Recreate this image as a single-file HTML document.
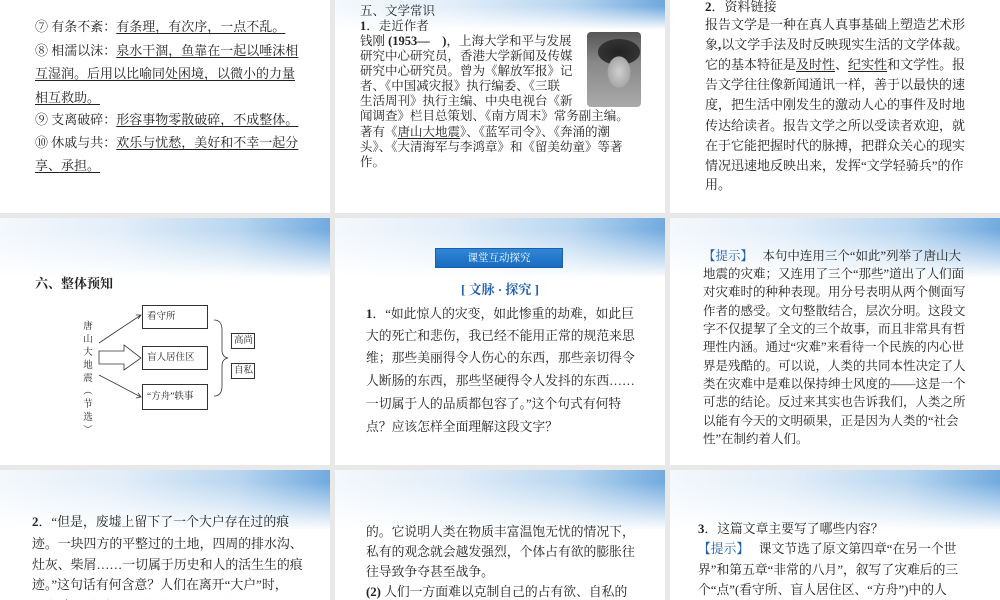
<!DOCTYPE html>
<html><head><meta charset="utf-8"><style>
body{margin:0;width:1000px;height:600px;background:#e8e8e8;position:relative;overflow:hidden;font-family:"Liberation Serif","Noto Serif CJK SC",serif;color:#222}
.p{position:absolute;background:#fff;overflow:hidden}
.hd{position:absolute;left:0;top:0;right:0;height:60px;background:linear-gradient(180deg,rgba(255,255,255,0) 0,rgba(255,255,255,0) 20%,#fff 100%),linear-gradient(100deg,#f4f8fc 0,#e3eef9 35%,#b9d6f0 70%,#6aa6dd 100%)}
.l{position:absolute;white-space:nowrap;font-size:13px}
.u{text-decoration:underline;text-underline-offset:2px}
.s{font-size:12.5px;line-height:15px}
.bl{color:#1f5fb0}
b{font-family:"Liberation Serif",serif}
.bx{position:absolute;border:1px solid #333;font-size:9.5px;background:#fff;box-sizing:border-box;padding-left:4px}
</style></head><body>
<!-- row1 -->
<div class="p" style="left:0;top:0;width:330px;height:213px">
<div class="l" style="left:35px;top:16px">⑦ 有条不紊：<span class="u">有条理，有次序，一点不乱。</span></div>
<div class="l" style="left:35px;top:40px">⑧ 相濡以沫：<span class="u">泉水干涸，鱼靠在一起以唾沫相</span></div>
<div class="l" style="left:35px;top:63px"><span class="u">互湿润。后用以比喻同处困境，以微小的力量</span></div>
<div class="l" style="left:35px;top:87px"><span class="u">相互救助。</span></div>
<div class="l" style="left:35px;top:109px">⑨ 支离破碎：<span class="u">形容事物零散破碎，不成整体。</span></div>
<div class="l" style="left:35px;top:132px">⑩ 休戚与共：<span class="u">欢乐与忧愁，美好和不幸一起分</span></div>
<div class="l" style="left:35px;top:155px"><span class="u">享、承担。</span></div>
</div>
<div class="p" style="left:335px;top:0;width:330px;height:213px">
<div class="hd" style="height:30px"></div>
<div class="l s" style="left:25px;top:4px">五、文学常识</div>
<div class="l s" style="left:25px;top:19px"><b>1</b>．走近作者</div>
<div class="l s" style="left:25px;top:34px">钱刚 <b>(1953—&nbsp;&nbsp;&nbsp;&nbsp;)</b>，上海大学和平与发展</div>
<div class="l s" style="left:25px;top:49px">研究中心研究员，香港大学新闻及传媒</div>
<div class="l s" style="left:25px;top:64px">研究中心研究员。曾为《解放军报》记</div>
<div class="l s" style="left:25px;top:79px">者、《中国减灾报》执行编委、《三联</div>
<div class="l s" style="left:25px;top:94px">生活周刊》执行主编、中央电视台《新</div>
<div class="l s" style="left:25px;top:109px">闻调查》栏目总策划、《南方周末》常务副主编。</div>
<div class="l s" style="left:25px;top:125px">著有《<span class="u">唐山大地震</span>》、《蓝军司令》、《奔涌的潮</div>
<div class="l s" style="left:25px;top:140px">头》、《大清海军与李鸿章》和《留美幼童》等著</div>
<div class="l s" style="left:25px;top:155px">作。</div>
<div style="position:absolute;left:252px;top:32px;width:54px;height:75px;border-radius:4px;background:radial-gradient(ellipse 16px 22px at 32px 40px,#d0d0d0 0,#a8a8a8 70%,transparent 72%),radial-gradient(ellipse 26px 16px at 32px 20px,#222 0,#333 80%,transparent 82%),linear-gradient(180deg,#555 0,#888 40%,#aaa 100%)"></div>
</div>
<div class="p" style="left:670px;top:0;width:330px;height:213px">
<div class="l" style="left:35px;top:-4px"><b>2</b>．资料链接</div>
<div class="l" style="left:35px;top:14px">报告文学是一种在真人真事基础上塑造艺术形</div>
<div class="l" style="left:35px;top:34px">象<b>,</b>以文学手法及时反映现实生活的文学体裁。</div>
<div class="l" style="left:35px;top:54px">它的基本特征是<span class="u">及时性</span>、<span class="u">纪实性</span>和文学性。报</div>
<div class="l" style="left:35px;top:74px">告文学往往像新闻通讯一样，善于以最快的速</div>
<div class="l" style="left:35px;top:94px">度，把生活中刚发生的激动人心的事件及时地</div>
<div class="l" style="left:35px;top:115px">传达给读者。报告文学之所以受读者欢迎，就</div>
<div class="l" style="left:35px;top:135px">在于它能把握时代的脉搏，把群众关心的现实</div>
<div class="l" style="left:35px;top:155px">情况迅速地反映出来，发挥“文学轻骑兵”的作</div>
<div class="l" style="left:35px;top:174px">用。</div>
</div>
<!-- row2 -->
<div class="p" style="left:0;top:218px;width:330px;height:247px">
<div class="hd"></div>
<div class="l" style="left:35px;top:55px;font-weight:bold;font-size:13px">六、整体预知</div>
<div class="bx" style="left:142px;top:87px;width:66px;height:24px;line-height:22px">看守所</div>
<div class="bx" style="left:142px;top:128px;width:66px;height:24px;line-height:22px">盲人居住区</div>
<div class="bx" style="left:142px;top:166px;width:66px;height:26px;line-height:24px">“方舟”轶事</div>
<div class="bx" style="left:231px;top:115px;width:24px;height:16px;line-height:14px;padding-left:2px">高尚</div>
<div class="bx" style="left:231px;top:145px;width:24px;height:16px;line-height:14px;padding-left:2px">自私</div>
<div style="position:absolute;left:82px;top:103px;width:12px;font-size:9.5px;line-height:13px;text-align:center">唐<br>山<br>大<br>地<br>震<br>︵<br>节<br>选<br>︶</div>
<svg style="position:absolute;left:0;top:0" width="330" height="247"><g fill="none" stroke="#333" stroke-width="0.8"><path d="M99 125 L141 97 M136 97 L141 97 L138 101"/><path d="M99 157 L141 179 M136 180 L141 179 L138 175"/><path d="M99 133 H124 V127 L141 140 L124 152 V146 H99 Z"/><path d="M214 102 Q222 102 222 112 V132 Q222 139 228 140 Q222 141 222 148 V168 Q222 178 214 178"/></g></svg>
</div>
<div class="p" style="left:335px;top:218px;width:330px;height:247px">
<div class="hd"></div>
<div style="position:absolute;left:100px;top:30px;width:128px;height:20px;background:linear-gradient(#2f86d6,#1a6cc0);border:1px solid #1a5ea8;color:#fff;font-size:10.5px;line-height:20px;text-align:center;box-sizing:border-box">课堂互动探究</div>
<div class="l bl" style="left:0;width:330px;text-align:center;top:61px;font-size:13px;font-weight:bold">[ 文脉 · 探究 ]</div>
<div class="l" style="left:31px;top:85px;font-size:12.8px"><b>1</b>．“如此惊人的灾变，如此惨重的劫难，如此巨</div>
<div class="l" style="left:31px;top:107px;font-size:12.8px">大的死亡和悲伤，我已经不能用正常的规范来思</div>
<div class="l" style="left:31px;top:129px;font-size:12.8px">维；那些美丽得令人伤心的东西，那些亲切得令</div>
<div class="l" style="left:31px;top:152px;font-size:12.8px">人断肠的东西，那些坚硬得令人发抖的东西……</div>
<div class="l" style="left:31px;top:175px;font-size:12.8px">一切属于人的品质都包容了。”这个句式有何特</div>
<div class="l" style="left:31px;top:198px;font-size:12.8px">点？应该怎样全面理解这段文字？</div>
</div>
<div class="p" style="left:670px;top:218px;width:330px;height:247px">
<div class="hd"></div>
<div class="l" style="left:33px;top:28px;font-size:12.5px"><span class="bl">【提示】</span>&nbsp;&nbsp;&nbsp;本句中连用三个“如此”列举了唐山大</div>
<div class="l" style="left:33px;top:46px;font-size:12.5px">地震的灾难；又连用了三个“那些”道出了人们面</div>
<div class="l" style="left:33px;top:64px;font-size:12.5px">对灾难时的种种表现。用分号表明从两个侧面写</div>
<div class="l" style="left:33px;top:83px;font-size:12.5px">作者的感受。文句整散结合，层次分明。这段文</div>
<div class="l" style="left:33px;top:101px;font-size:12.5px">字不仅提挈了全文的三个故事，而且非常具有哲</div>
<div class="l" style="left:33px;top:119px;font-size:12.5px">理性内涵。通过“灾难”来看待一个民族的内心世</div>
<div class="l" style="left:33px;top:138px;font-size:12.5px">界是残酷的。可以说，人类的共同本性决定了人</div>
<div class="l" style="left:33px;top:156px;font-size:12.5px">类在灾难中是难以保持绅士风度的——这是一个</div>
<div class="l" style="left:33px;top:174px;font-size:12.5px">可悲的结论。反过来其实也告诉我们，人类之所</div>
<div class="l" style="left:33px;top:193px;font-size:12.5px">以能有今天的文明硕果，正是因为人类的“社会</div>
<div class="l" style="left:33px;top:211px;font-size:12.5px">性”在制约着人们。</div>
</div>
<!-- row3 -->
<div class="p" style="left:0;top:470px;width:330px;height:130px">
<div class="hd"></div>
<div class="l" style="left:32px;top:41px;font-size:12.9px"><b>2</b>．“但是，废墟上留下了一个大户存在过的痕</div>
<div class="l" style="left:32px;top:63px;font-size:12.9px">迹。一块四方的平整过的土地，四周的排水沟、</div>
<div class="l" style="left:32px;top:84px;font-size:12.9px">灶灰、柴屑……一切属于历史和人的活生生的痕</div>
<div class="l" style="left:32px;top:104px;font-size:12.9px">迹。”这句话有何含意？人们在离开“大户”时，</div>
<div class="l" style="left:32px;top:126px;font-size:12.9px">都会“投去依恋的一瞥”的原因是什么？</div>
</div>
<div class="p" style="left:335px;top:470px;width:330px;height:130px">
<div class="hd"></div>
<div class="l" style="left:31px;top:51px;font-size:12.8px">的。它说明人类在物质丰富温饱无忧的情况下，</div>
<div class="l" style="left:31px;top:71px;font-size:12.8px">私有的观念就会越发强烈，个体占有欲的膨胀往</div>
<div class="l" style="left:31px;top:91px;font-size:12.8px">往导致争夺甚至战争。</div>
<div class="l" style="left:31px;top:111px;font-size:12.8px"><b>(2)</b> 人们一方面难以克制自己的占有欲、自私的</div>
</div>
<div class="p" style="left:670px;top:470px;width:330px;height:130px">
<div class="hd"></div>
<div class="l" style="left:28px;top:48px;font-size:12.8px"><b>3</b>．这篇文章主要写了哪些内容？</div>
<div class="l" style="left:28px;top:68px;font-size:12.8px"><span class="bl">【提示】</span>&nbsp;&nbsp;&nbsp;课文节选了原文第四章“在另一个世</div>
<div class="l" style="left:28px;top:89px;font-size:12.8px">界”和第五章“非常的八月”，叙写了灾难后的三</div>
<div class="l" style="left:28px;top:109px;font-size:12.8px">个“点”(看守所、盲人居住区、“方舟”)中的人</div>
</div>
</body></html>
